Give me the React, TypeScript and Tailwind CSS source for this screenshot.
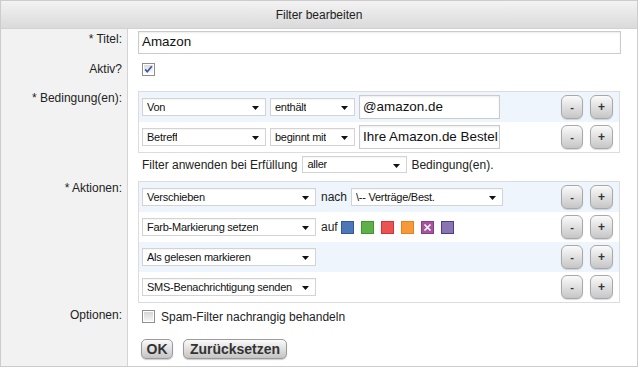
import React from "react";

const Arrow = () => (
  <svg width="7" height="4" viewBox="0 0 7 4" className="mt-[2px] shrink-0">
    <polygon points="0,0 7,0 3.5,4" fill="#111" />
  </svg>
);

function Sel({ className, text }: { className: string; text: string }) {
  return (
    <div
      className={
        "flex items-center justify-between bg-white border border-[#d3d3d3] pl-[4px] pr-[6px] text-[11px] tracking-[-0.25px] text-[#111] leading-none shadow-[inset_0_1px_1px_rgba(0,0,0,0.04)] " +
        className
      }
    >
      <span className="whitespace-nowrap overflow-hidden">{text}</span>
      <Arrow />
    </div>
  );
}

function TextBox({ text }: { text: string }) {
  return (
    <div className="w-[141px] h-[24px] bg-white border border-[#cbcbcb] shadow-[inset_0_1px_2px_rgba(0,0,0,0.08)] pl-[3px] flex items-center text-[13.4px] text-[#111] whitespace-nowrap overflow-hidden">
      {text}
    </div>
  );
}

function PM() {
  return (
    <div className="ml-auto mr-[6px] flex gap-[7px]">
      <div className="w-[22px] h-[24px] rounded-[6px] border border-[#a8a8a8] bg-linear-to-b from-[#fbfbfb] to-[#c6c6c6] shadow-[0_1px_1px_rgba(0,0,0,0.15)] flex items-center justify-center text-[11px] font-bold text-[#333] leading-none">
        -
      </div>
      <div className="w-[23px] h-[24px] rounded-[6px] border border-[#a8a8a8] bg-linear-to-b from-[#fbfbfb] to-[#c6c6c6] shadow-[0_1px_1px_rgba(0,0,0,0.15)] flex items-center justify-center text-[12px] font-bold text-[#333] leading-none">
        +
      </div>
    </div>
  );
}

function Label({ text, pt }: { text: string; pt: string }) {
  return (
    <div
      className={
        "w-[127px] shrink-0 bg-[#f2f2f2] border-r border-[#d4d4d4] text-right pr-[5px] text-[12px] leading-[14px] text-[#222] " +
        pt
      }
    >
      {text}
    </div>
  );
}

function Swatch({ bg, border, x }: { bg: string; border: string; x?: boolean }) {
  return (
    <div className={"w-[13px] h-[13px] border flex items-center justify-center " + bg + " " + border}>
      {x && (
        <svg width="9" height="9" viewBox="0 0 9 9">
          <path d="M1.5 1.5 L7.5 7.5 M7.5 1.5 L1.5 7.5" stroke="#fff" strokeWidth="1.6" />
        </svg>
      )}
    </div>
  );
}

export default function App() {
  return (
    <div className="w-[638px] h-[367px] border border-[#cccccc] bg-white font-['Liberation_Sans',Arial,sans-serif] text-[#222] flex flex-col overflow-hidden">
      <div className="h-[28px] shrink-0 border-b border-[#d2d2d2] bg-linear-to-b from-[#f3f3f3] to-[#dadada] flex items-center justify-center text-[12px] text-[#222]">
        Filter bearbeiten
      </div>

      {/* Titel */}
      <div className="flex h-[29px] shrink-0">
        <Label text="* Titel:" pt="pt-[3px]" />
        <div className="flex-1 pl-[10px] pt-[2px]">
          <div className="w-[483px] h-[23px] border border-[#cbcbcb] shadow-[inset_0_1px_2px_rgba(0,0,0,0.08)] pl-[3px] flex items-center text-[13.4px] text-[#111]">
            Amazon
          </div>
        </div>
      </div>

      {/* Aktiv */}
      <div className="flex h-[26px] shrink-0">
        <Label text="Aktiv?" pt="pt-[4px]" />
        <div className="flex-1 pl-[14px] pt-[5px]">
          <svg width="13" height="13" viewBox="0 0 13 13">
            <defs>
              <linearGradient id="cbg" x1="0" y1="0" x2="0" y2="1">
                <stop offset="0" stopColor="#dcdcdc" />
                <stop offset="1" stopColor="#ffffff" />
              </linearGradient>
            </defs>
            <rect x="0.5" y="0.5" width="12" height="12" fill="#fff" stroke="#8e8f8f" />
            <rect x="2" y="2" width="9" height="9" fill="url(#cbg)" />
            <path d="M3.2 6.4 L5.3 8.8 L9.8 3.2" stroke="#3b55a0" strokeWidth="1.7" fill="none" />
          </svg>
        </div>
      </div>

      {/* Bedingungen */}
      <div className="flex h-[69px] shrink-0">
        <Label text="* Bedingung(en):" pt="pt-[7px]" />
        <div className="flex-1 pl-[10px] pt-[7px]">
          <div className="w-[482px] border border-[#dcdcdc] flex flex-col">
            <div className="h-[30px] bg-[#eef5fc] flex items-center pl-[3px] gap-[4px]">
              <Sel className="w-[124px] h-[18px]" text="Von" />
              <Sel className="w-[85px] h-[18px]" text="enthält" />
              <TextBox text="@amazon.de" />
              <PM />
            </div>
            <div className="h-[30px] bg-white flex items-center pl-[3px] gap-[4px]">
              <Sel className="w-[124px] h-[18px]" text="Betreff" />
              <Sel className="w-[85px] h-[18px]" text="beginnt mit" />
              <TextBox text="Ihre Amazon.de Bestel" />
              <PM />
            </div>
          </div>
        </div>
      </div>

      {/* Filter anwenden */}
      <div className="flex h-[23px] shrink-0">
        <div className="w-[127px] shrink-0 bg-[#f2f2f2] border-r border-[#d4d4d4]" />
        <div className="flex-1 pl-[14px] pt-[3px] flex items-start">
          <div className="flex items-center h-[17px] text-[12px] leading-[14px]">
            <span className="mr-[5px]">Filter anwenden bei Erfüllung</span>
            <Sel className="w-[105px] h-[17px]" text="aller" />
            <span className="ml-[4px]">Bedingung(en).</span>
          </div>
        </div>
      </div>

      {/* Aktionen */}
      <div className="flex h-[127px] shrink-0">
        <Label text="* Aktionen:" pt="pt-[5px]" />
        <div className="flex-1 pl-[10px] pt-[5px]">
          <div className="w-[482px] border border-[#dcdcdc] flex flex-col text-[12px]">
            <div className="h-[30px] bg-[#eef5fc] flex items-center pl-[3px]">
              <Sel className="w-[174px] h-[18px]" text="Verschieben" />
              <span className="ml-[5px] mr-[4px]">nach</span>
              <Sel className="w-[152px] h-[18px]" text="\-- Verträge/Best." />
              <PM />
            </div>
            <div className="h-[30px] bg-white flex items-center pl-[3px]">
              <Sel className="w-[174px] h-[18px]" text="Farb-Markierung setzen" />
              <span className="ml-[5px] mr-[3px]">auf</span>
              <div className="flex gap-[7px]">
                <Swatch bg="bg-[#4d78b8]" border="border-[#36589a]" />
                <Swatch bg="bg-[#5fb04a]" border="border-[#3c9a2c]" />
                <Swatch bg="bg-[#ea5353]" border="border-[#d83232]" />
                <Swatch bg="bg-[#f6993a]" border="border-[#e8801c]" />
                <Swatch bg="bg-[#a4559e]" border="border-[#8a3c86]" x />
                <Swatch bg="bg-[#8a74b2]" border="border-[#4e3e8a]" />
              </div>
              <PM />
            </div>
            <div className="h-[30px] bg-[#eef5fc] flex items-center pl-[3px]">
              <Sel className="w-[174px] h-[18px]" text="Als gelesen markieren" />
              <PM />
            </div>
            <div className="h-[30px] bg-white flex items-center pl-[3px]">
              <Sel className="w-[174px] h-[18px]" text="SMS-Benachrichtigung senden" />
              <PM />
            </div>
          </div>
        </div>
      </div>

      {/* Optionen */}
      <div className="flex h-[27px] shrink-0">
        <Label text="Optionen:" pt="pt-[5px]" />
        <div className="flex-1 pl-[14px] pt-[7px] flex items-start gap-[6px]">
          <svg width="13" height="13" viewBox="0 0 13 13" className="shrink-0">
            <defs>
              <linearGradient id="cbg2" x1="0" y1="0" x2="0" y2="1">
                <stop offset="0" stopColor="#d6d6d6" />
                <stop offset="1" stopColor="#f6f6f6" />
              </linearGradient>
            </defs>
            <rect x="0.5" y="0.5" width="12" height="12" fill="#fff" stroke="#8e8f8f" />
            <rect x="2" y="2" width="9" height="9" fill="url(#cbg2)" />
          </svg>
          <span className="text-[12px] leading-[14px]">Spam-Filter nachrangig behandeln</span>
        </div>
      </div>

      {/* Buttons */}
      <div className="flex flex-1">
        <div className="w-[127px] shrink-0 bg-[#f2f2f2] border-r border-[#d4d4d4]" />
        <div className="flex-1 pl-[13px] pt-[9px] flex items-start gap-[10px]">
          <div className="h-[20px] w-[32px] rounded-[5px] border border-[#9a9a9a] bg-linear-to-b from-[#fbfbfb] to-[#c4c4c4] shadow-[0_1px_1px_rgba(0,0,0,0.2)] flex items-center justify-center text-[14px] font-bold text-[#333] leading-none">
            OK
          </div>
          <div className="h-[20px] w-[104px] rounded-[5px] border border-[#9a9a9a] bg-linear-to-b from-[#fbfbfb] to-[#c4c4c4] shadow-[0_1px_1px_rgba(0,0,0,0.2)] flex items-center justify-center text-[14px] font-bold text-[#333] leading-none">
            Zurücksetzen
          </div>
        </div>
      </div>
    </div>
  );
}
